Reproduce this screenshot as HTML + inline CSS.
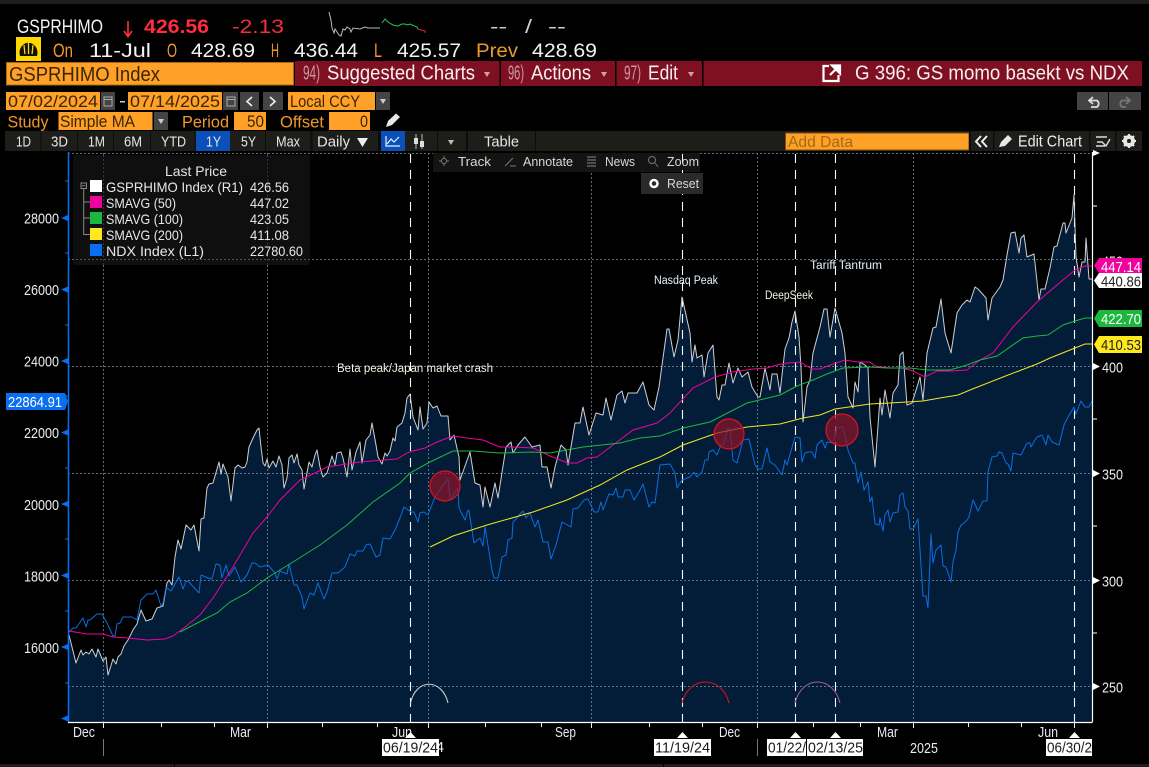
<!DOCTYPE html>
<html><head><meta charset="utf-8"><title>GSPRHIMO Index</title>
<style>
html,body{margin:0;padding:0;background:#000;width:1149px;height:767px;overflow:hidden}
svg{display:block;font-family:"Liberation Sans",sans-serif}
</style></head><body>
<svg width="1149" height="767" viewBox="0 0 1149 767" xmlns="http://www.w3.org/2000/svg">
<rect width="1149" height="767" fill="#000"/>
<rect width="1149" height="4" fill="#1e1e1e"/>
<rect y="764" width="1149" height="3" fill="#1e1e1e"/>
<rect x="174" y="764" width="1" height="3" fill="#000"/><rect x="663" y="764" width="1" height="3" fill="#000"/>

<!-- quote row -->
<g font-size="19">
<text x="17" y="33" textLength="86" lengthAdjust="spacingAndGlyphs" fill="#f2f2f2">GSPRHIMO</text>
<path d="M128 21V36M124 31L128 36.5L132 31" stroke="#ff3040" stroke-width="1.6" fill="none"/>
<text x="144" y="33" textLength="65" lengthAdjust="spacingAndGlyphs" fill="#ff2d3e" font-weight="bold">426.56</text>
<text x="232" y="33" textLength="52" lengthAdjust="spacingAndGlyphs" fill="#f2303c">-2.13</text>
<text x="490" y="33" textLength="17" lengthAdjust="spacingAndGlyphs" fill="#ccc">--</text>
<text x="525" y="33" textLength="7" lengthAdjust="spacingAndGlyphs" fill="#ccc">/</text>
<text x="548" y="33" textLength="18" lengthAdjust="spacingAndGlyphs" fill="#ccc">--</text>
</g>
<polyline fill="none" stroke="#bbb" stroke-width="1" points="329,12 331,20 332,28 334,33 335,29 337,32 339,35 341,36 343,29 345,30 347,27 350,29 351,32 353,28 360,29 365,27 368,28 373,28 380,28"/>
<polyline fill="none" stroke="#22c55a" stroke-width="1" points="382,23 385,19 388,22 393,25 398,26 402,24 405,24 407,25 410,24 417,27 418,29"/>
<polyline fill="none" stroke="#f0203a" stroke-width="1" points="418,29 425,31 425,33"/>

<!-- gauge -->
<rect x="16" y="37" width="25" height="24" fill="#ffd800"/>
<path d="M20 56A9 10 0 1 1 37 56Z" fill="#111"/>
<path d="M28.500 42V55M24 45L25 55M33 45L32 55" stroke="#ffd800" stroke-width="1.300"/>
<rect x="20" y="54" width="17" height="2" fill="#111"/>

<g font-size="19">
<text x="53" y="57" textLength="20" lengthAdjust="spacingAndGlyphs" fill="#f0982a">On</text>
<text x="89" y="57" textLength="62" lengthAdjust="spacingAndGlyphs" fill="#f2f2f2">11-Jul</text>
<text x="167" y="57" textLength="10" lengthAdjust="spacingAndGlyphs" fill="#f0982a">O</text>
<text x="191" y="57" textLength="64" lengthAdjust="spacingAndGlyphs" fill="#f2f2f2">428.69</text>
<text x="271" y="57" textLength="8" lengthAdjust="spacingAndGlyphs" fill="#f0982a">H</text>
<text x="294" y="57" textLength="64" lengthAdjust="spacingAndGlyphs" fill="#f2f2f2">436.44</text>
<text x="374" y="57" textLength="8" lengthAdjust="spacingAndGlyphs" fill="#f0982a">L</text>
<text x="397" y="57" textLength="64" lengthAdjust="spacingAndGlyphs" fill="#f2f2f2">425.57</text>
<text x="476" y="57" textLength="42" lengthAdjust="spacingAndGlyphs" fill="#f0982a">Prev</text>
<text x="532" y="57" textLength="65" lengthAdjust="spacingAndGlyphs" fill="#f2f2f2">428.69</text>
</g>

<!-- command row -->
<rect x="295" y="61" width="847" height="25" fill="#7f1022"/>
<rect x="499.500" y="61" width="1.500" height="25" fill="#000"/>
<rect x="615" y="61" width="1.500" height="25" fill="#000"/>
<rect x="702" y="61" width="1.500" height="25" fill="#000"/>
<rect x="6.500" y="62.500" width="287" height="22.500" fill="#ffa126" stroke="#a86a18"/>
<text x="9" y="81" font-size="20" textLength="151" lengthAdjust="spacingAndGlyphs" fill="#3a2508">GSPRHIMO Index</text>
<g font-size="20">
<text x="303" y="79.500" textLength="17" lengthAdjust="spacingAndGlyphs" fill="#c89aa2">94)</text>
<text x="327" y="79.500" textLength="148" lengthAdjust="spacingAndGlyphs" fill="#f6f0f0">Suggested Charts</text>
<text x="508" y="79.500" textLength="16" lengthAdjust="spacingAndGlyphs" fill="#c89aa2">96)</text>
<text x="531" y="79.500" textLength="60" lengthAdjust="spacingAndGlyphs" fill="#f6f0f0">Actions</text>
<text x="624" y="79.500" textLength="17" lengthAdjust="spacingAndGlyphs" fill="#c89aa2">97)</text>
<text x="648" y="79.500" textLength="30" lengthAdjust="spacingAndGlyphs" fill="#f6f0f0">Edit</text>
<text x="855" y="79.500" textLength="274" lengthAdjust="spacingAndGlyphs" fill="#f6f0f0">G 396: GS momo basekt vs NDX</text>
</g>
<path d="M484 72h6l-3 5zM601 72h6l-3 5zM688 72h6l-3 5z" fill="#c9a6ac"/>
<path d="M829 66H823.500V81H838.500V75" fill="none" stroke="#fff" stroke-width="2.200"/>
<path d="M830 75L838 67M832 65.500H840V73.500Z" stroke="#fff" stroke-width="2.200" fill="#fff"/>

<!-- date row -->
<g font-size="17" fill="#3a2508">
<rect x="6" y="92" width="94" height="18" fill="#ffa126"/>
<text x="8" y="107" textLength="90" lengthAdjust="spacingAndGlyphs">07/02/2024</text>
<rect x="128" y="92" width="94" height="18" fill="#ffa126"/>
<text x="130" y="107" textLength="90" lengthAdjust="spacingAndGlyphs">07/14/2025</text>
<rect x="288" y="92" width="87" height="18" fill="#ffa126"/>
<text x="290" y="107" textLength="70" lengthAdjust="spacingAndGlyphs">Local CCY</text>
</g>
<rect x="120" y="101" width="5" height="1.500" fill="#ccc"/>
<g fill="#444">
<rect x="101" y="92" width="14" height="18"/><rect x="223" y="92" width="15" height="18"/>
<rect x="240" y="92" width="19" height="18"/><rect x="263" y="92" width="20" height="18"/>
<rect x="376" y="92" width="14" height="18"/><rect x="154" y="112" width="14" height="18"/>
<rect x="1077" y="92" width="31" height="18"/><rect x="1109" y="92" width="32" height="18"/>
</g>
<path d="M104 97h8v9h-8zM104 99.500h8M227 97h8v9h-8zM227 99.500h8" fill="none" stroke="#aaa"/>
<path d="M252 97L247 101.500L252 106M270 97L275 101.500L270 106" fill="none" stroke="#eee" stroke-width="1.600"/>
<path d="M380 99h6l-3 5zM158 119h6l-3 5z" fill="#ccc"/>
<path d="M1093 97L1089 100.500L1093 104M1090 100.500H1097A4 4 0 0 1 1097 107H1091" fill="none" stroke="#ddd" stroke-width="1.800"/>
<path d="M1126 97L1130 100.500L1126 104M1129 100.500H1122A4 4 0 0 0 1122 107H1126" fill="none" stroke="#777" stroke-width="1.800"/>

<!-- study row -->
<g font-size="17">
<text x="7.500" y="127.500" textLength="41" lengthAdjust="spacingAndGlyphs" fill="#f0982a">Study</text>
<rect x="58.500" y="112" width="94" height="18" fill="#ffa126"/>
<text x="60" y="127" textLength="75" lengthAdjust="spacingAndGlyphs" fill="#3a2508">Simple MA</text>
<text x="182" y="127.500" textLength="47" lengthAdjust="spacingAndGlyphs" fill="#f0982a">Period</text>
<rect x="234" y="112" width="32" height="18" fill="#ffa126"/>
<text x="247" y="127" textLength="17" lengthAdjust="spacingAndGlyphs" fill="#3a2508">50</text>
<text x="280" y="127.500" textLength="44" lengthAdjust="spacingAndGlyphs" fill="#f0982a">Offset</text>
<rect x="329" y="112" width="41" height="18" fill="#ffa126"/>
<text x="360" y="127" textLength="8" lengthAdjust="spacingAndGlyphs" fill="#3a2508">0</text>
</g>
<path d="M386 127L388 121L396 113.500L400 117L392 125Z" fill="#e8e8e8"/>

<!-- range row -->
<rect x="5" y="131" width="1137" height="20" fill="#1d1d19"/>
<g fill="#0c0c0c">
<rect x="40.500" y="131" width="1" height="20"/><rect x="77" y="131" width="1" height="20"/><rect x="113" y="131" width="1" height="20"/><rect x="150" y="131" width="1" height="20"/><rect x="194.500" y="131" width="1" height="20"/><rect x="265" y="131" width="1" height="20"/><rect x="310.500" y="131" width="2" height="20"/><rect x="378" y="131" width="3" height="20"/><rect x="437" y="131" width="1" height="20"/><rect x="466" y="131" width="2" height="20"/><rect x="535" y="131" width="1" height="20"/>
</g>
<rect x="196" y="131" width="34" height="20" fill="#0a50b8"/>
<rect x="381" y="131" width="24" height="20" fill="#0a50b8"/>
<g font-size="15" fill="#e6e6e6">
<text x="16" y="146.500" textLength="15" lengthAdjust="spacingAndGlyphs">1D</text>
<text x="51" y="146.500" textLength="17" lengthAdjust="spacingAndGlyphs">3D</text>
<text x="88" y="146.500" textLength="17" lengthAdjust="spacingAndGlyphs">1M</text>
<text x="124" y="146.500" textLength="18" lengthAdjust="spacingAndGlyphs">6M</text>
<text x="161" y="146.500" textLength="25" lengthAdjust="spacingAndGlyphs">YTD</text>
<text x="206" y="146.500" textLength="15" lengthAdjust="spacingAndGlyphs">1Y</text>
<text x="241" y="146.500" textLength="15" lengthAdjust="spacingAndGlyphs">5Y</text>
<text x="276" y="146.500" textLength="24" lengthAdjust="spacingAndGlyphs">Max</text>
<text x="317" y="146.500" textLength="33" lengthAdjust="spacingAndGlyphs">Daily</text>
<text x="484" y="146.500" textLength="35" lengthAdjust="spacingAndGlyphs">Table</text>
</g>
<path d="M357 138h11l-5.500 9z" fill="#eee"/>
<path d="M386 136V146H400M387 144L391 139L394 142L399 137" fill="none" stroke="#e8f0ff" stroke-width="1.200"/>
<path d="M416 134V149M422 134V149" stroke="#bbb" stroke-width="1"/><rect x="414" y="138" width="4" height="6" fill="#ddd"/><rect x="420" y="141" width="4" height="6" fill="#ddd"/>
<path d="M448 140h6l-3 5z" fill="#bbb"/>
<rect x="785.500" y="133" width="183.500" height="17" fill="#ffa126" stroke="#7a4c10"/>
<text x="788" y="147" font-size="16" textLength="65" lengthAdjust="spacingAndGlyphs" fill="#a36a14">Add Data</text>
<g fill="#0c0c0c"><rect x="969" y="131" width="2" height="20"/><rect x="993" y="131" width="1.500" height="20"/><rect x="1089" y="131" width="1.500" height="20"/><rect x="1115" y="131" width="1.500" height="20"/></g>
<path d="M981 136L976 141.500L981 147M987 136L982 141.500L987 147" fill="none" stroke="#eee" stroke-width="2"/>
<path d="M999 147L1001 142L1008 135L1012 139L1005 146Z" fill="#e8e8e8"/>
<text x="1018" y="146.500" font-size="16" textLength="64" lengthAdjust="spacingAndGlyphs" fill="#eee">Edit Chart</text>
<path d="M1096 137H1107M1096 146H1105M1097 142H1102L1106 146L1110 139" fill="none" stroke="#ddd" stroke-width="1.400"/>
<circle cx="1129" cy="141" r="4.500" fill="none" stroke="#e8e8e8" stroke-width="3"/>
<path d="M1129 134V148M1122 141H1136M1124 136L1134 146M1134 136L1124 146" stroke="#e8e8e8" stroke-width="2"/>
<circle cx="1129" cy="141" r="2" fill="#1d1d19"/>

<!-- chart fill -->
<polygon fill="#031d38" points="69,722 69,635 76,663 81,650 83,655 86,652 89,654 92,649 96,657 98,649 103,661 106,657 108,675 113,659 116,664 118,657 121,654 124,646 128,640 133,630 137,624 141,610 146,621 152,619 157,608 163,606 167,583 169,580 172,585 175,557 178,540 181,549 186,525 191,530 194,525 199,551 201,519 204,518 207,488 209,484 213,483 219,462 221,474 223,464 228,477 231,501 235,468 238,465 242,468 245,467 247,462 249,447 253,438 257,430 259,428 261,447 263,463 265,466 267,459 269,468 273,461 276,467 279,456 282,465 284,488 287,478 289,458 292,455 294,463 297,454 299,465 302,470 304,489 309,462 312,467 315,455 317,450 320,467 323,477 327,473 332,456 335,465 337,453 341,452 343,458 347,477 350,449 352,470 356,452 360,442 362,463 366,440 370,435 372,423 376,445 378,457 382,464 385,453 387,456 390,451 393,438 395,441 397,427 402,423 405,413 407,398 410,394 413,417 418,430 420,407 423,429 427,423 429,402 433,408 437,406 441,416 448,416 450,440 454,435 459,457 460,480 470,452 475,483 480,485 483,507 485,487 490,507 495,483 498,498 506,447 511,442 513,453 518,445 525,437 532,447 540,445 542,467 547,467 551,488 555,467 561,445 566,450 568,465 575,423 580,423 583,407 589,435 596,413 603,415 606,398 611,420 617,395 622,391 625,403 628,393 637,393 643,382 649,405 654,410 659,387 667,329 669,329 674,357 678,340 682,297 690,333 692,362 695,345 697,358 702,355 704,377 708,353 713,345 717,397 719,400 722,385 725,385 729,363 733,383 738,368 742,377 748,372 752,387 758,397 760,397 765,368 770,390 772,374 777,374 780,393 785,349 789,338 792,322 795,311 799,337 801,367 803,422 807,387 810,380 813,353 820,327 824,309 827,309 830,337 835,308 842,333 845,353 848,397 853,408 855,382 858,392 860,362 865,365 868,368 870,417 875,467 880,398 882,415 885,390 890,418 893,393 898,385 900,355 903,352 907,405 912,403 917,387 920,377 923,400 927,353 933,328 936,327 941,299 945,333 951,353 957,313 962,305 967,300 970,302 975,287 978,289 986,298 988,320 992,298 1000,287 1003,280 1007,255 1011,233 1015,232 1019,253 1021,238 1024,235 1027,257 1034,254 1039,300 1041,289 1045,289 1050,268 1054,247 1057,246 1063,223 1065,223 1066,233 1072,218 1074,195 1076,257 1079,277 1082,262 1085,262 1086,238 1089,279 1092,279 1092,722"/>

<!-- grid -->
<g stroke="#8c98a6" stroke-width="1" stroke-dasharray="2 2" opacity=".7" fill="none">
<path d="M68 153.500H1092M68 259.500H1092M68 366.500H1092M68 473.500H1092M68 580.500H1092M68 686.500H1092"/>
<path d="M103.500 153V722M267.500 153V722M428.500 153V722M591.500 153V722M757.500 153V722M913.500 153V722"/>
</g>

<!-- event lines -->
<g stroke="#fff" stroke-width="1.100" stroke-dasharray="9 7" fill="none">
<path d="M410.500 154V722M682.500 154V722M795.500 154V722M835.500 154V722M1074.500 154V722"/>
</g>

<!-- series -->
<polyline fill="none" stroke="#ccd0d4" stroke-width="1" stroke-linejoin="round" points="69,635 76,663 81,650 83,655 86,652 89,654 92,649 96,657 98,649 103,661 106,657 108,675 113,659 116,664 118,657 121,654 124,646 128,640 133,630 137,624 141,610 146,621 152,619 157,608 163,606 167,583 169,580 172,585 175,557 178,540 181,549 186,525 191,530 194,525 199,551 201,519 204,518 207,488 209,484 213,483 219,462 221,474 223,464 228,477 231,501 235,468 238,465 242,468 245,467 247,462 249,447 253,438 257,430 259,428 261,447 263,463 265,466 267,459 269,468 273,461 276,467 279,456 282,465 284,488 287,478 289,458 292,455 294,463 297,454 299,465 302,470 304,489 309,462 312,467 315,455 317,450 320,467 323,477 327,473 332,456 335,465 337,453 341,452 343,458 347,477 350,449 352,470 356,452 360,442 362,463 366,440 370,435 372,423 376,445 378,457 382,464 385,453 387,456 390,451 393,438 395,441 397,427 402,423 405,413 407,398 410,394 413,417 418,430 420,407 423,429 427,423 429,402 433,408 437,406 441,416 448,416 450,440 454,435 459,457 460,480 470,452 475,483 480,485 483,507 485,487 490,507 495,483 498,498 506,447 511,442 513,453 518,445 525,437 532,447 540,445 542,467 547,467 551,488 555,467 561,445 566,450 568,465 575,423 580,423 583,407 589,435 596,413 603,415 606,398 611,420 617,395 622,391 625,403 628,393 637,393 643,382 649,405 654,410 659,387 667,329 669,329 674,357 678,340 682,297 690,333 692,362 695,345 697,358 702,355 704,377 708,353 713,345 717,397 719,400 722,385 725,385 729,363 733,383 738,368 742,377 748,372 752,387 758,397 760,397 765,368 770,390 772,374 777,374 780,393 785,349 789,338 792,322 795,311 799,337 801,367 803,422 807,387 810,380 813,353 820,327 824,309 827,309 830,337 835,308 842,333 845,353 848,397 853,408 855,382 858,392 860,362 865,365 868,368 870,417 875,467 880,398 882,415 885,390 890,418 893,393 898,385 900,355 903,352 907,405 912,403 917,387 920,377 923,400 927,353 933,328 936,327 941,299 945,333 951,353 957,313 962,305 967,300 970,302 975,287 978,289 986,298 988,320 992,298 1000,287 1003,280 1007,255 1011,233 1015,232 1019,253 1021,238 1024,235 1027,257 1034,254 1039,300 1041,289 1045,289 1050,268 1054,247 1057,246 1063,223 1065,223 1066,233 1072,218 1074,195 1076,257 1079,277 1082,262 1085,262 1086,238 1089,279 1092,279"/>
<polyline fill="none" stroke="#0a6ee0" stroke-width="1" stroke-linejoin="round" points="69,632 73,628 76,628 83,618 86,627 88,620 90,620 97,614 102,614 107,623 113,636 115,636 117,624 120,623 123,617 132,617 137,620 141,600 147,594 153,594 156,590 161,606 163,603 166,587 171,591 179,577 183,589 186,581 189,582 199,593 201,575 208,578 212,579 216,564 220,565 222,578 226,565 229,576 235,567 241,582 247,575 252,563 255,563 260,567 268,565 275,573 277,579 280,571 287,574 289,564 294,585 297,585 302,597 304,609 310,593 314,595 318,583 324,599 327,592 332,573 338,573 345,567 350,554 355,556 357,551 363,551 366,545 370,544 376,557 380,555 383,538 390,539 395,530 397,525 400,518 404,507 411,512 414,512 418,522 420,513 424,512 428,515 435,497 443,485 448,479 450,500 458,488 459,508 465,520 468,510 469,511 474,543 480,538 483,546 485,527 492,570 494,578 498,578 500,568 502,557 506,555 508,540 512,538 513,522 517,518 519,515 523,511 526,518 530,513 535,527 538,520 543,542 548,542 551,559 556,545 562,522 571,527 573,509 578,508 584,500 588,499 594,512 598,512 601,502 603,510 609,494 613,495 616,488 618,497 623,497 625,490 630,490 634,500 639,492 643,484 649,507 652,502 655,503 660,465 670,464 675,473 677,488 682,480 690,477 694,472 697,477 702,472 705,460 708,460 709,452 713,450 717,455 721,445 723,445 728,428 730,429 733,460 737,463 743,440 749,439 755,465 758,469 762,469 767,448 770,462 775,465 782,475 785,460 787,465 795,437 800,438 802,462 805,453 808,452 812,452 815,458 817,445 822,440 825,448 827,442 833,443 837,428 843,427 848,450 853,463 855,463 858,483 861,472 864,490 868,482 870,502 872,497 875,524 879,525 880,518 883,531 885,515 888,510 890,522 893,513 898,512 900,495 903,493 905,507 908,511 910,529 913,529 918,519 923,596 926,596 928,608 931,534 933,563 936,550 941,545 943,566 946,567 951,582 953,562 956,550 958,532 961,525 963,524 967,520 969,517 973,500 978,511 983,501 987,501 988,472 992,457 997,456 999,452 1002,453 1006,463 1008,464 1011,471 1013,453 1021,455 1027,443 1030,443 1031,447 1035,440 1037,437 1042,435 1046,445 1048,435 1052,442 1059,445 1064,425 1068,417 1074,407 1076,414 1081,401 1085,407 1089,407 1092,401"/>
<polyline fill="none" stroke="#f0029c" stroke-width="1" points="69,631 87,634 103,634 113,637 128,638 147,640 165,639 173,636 185,627 200,615 213,598 233,567 253,533 267,517 280,500 300,480 317,472 327,467 347,464 360,462 383,460 397,459 407,453 413,451 425,448 437,442 453,436 467,438 483,440 500,447 513,447 533,448 550,456 568,463 577,463 587,458 597,457 613,445 633,430 657,423 670,413 693,388 715,377 733,372 753,369 767,368 777,365 787,363 800,362 812,369 820,369 833,364 845,360 857,362 870,362 875,366 890,368 903,368 913,371 925,377 937,371 950,371 967,370 980,360 993,353 1013,327 1037,302 1057,285 1075,270 1085,266 1092,266"/>
<polyline fill="none" stroke="#1cb83e" stroke-width="1" points="180,632 203,620 217,613 230,602 247,593 267,578 293,562 320,545 347,525 373,502 400,483 410,473 430,462 453,451 473,451 500,453 533,452 550,453 583,447 620,443 640,438 660,436 683,428 710,422 747,403 780,395 797,386 813,380 827,374 843,368 870,367 887,368 910,368 927,370 950,370 967,365 980,360 997,356 1023,338 1037,336 1048,335 1063,325 1075,321 1085,318 1092,318"/>
<polyline fill="none" stroke="#f4e61e" stroke-width="1" points="430,547 453,536 487,525 533,512 567,500 600,485 627,470 660,457 683,445 717,433 747,427 780,424 803,418 820,415 835,409 870,404 890,403 923,401 940,398 958,395 970,390 1003,377 1037,364 1050,358 1070,350 1085,344 1092,344"/>

<!-- circles -->
<g fill="#8c1428" fill-opacity=".72" stroke="#e2101e" stroke-width="1.200">
<circle cx="445" cy="486" r="15"/><circle cx="729" cy="434" r="15"/><circle cx="842" cy="430" r="16"/>
</g>

<!-- arcs -->
<g fill="none" stroke-width="1.100">
<path d="M410.500 703C416 678 442 678 448 703" stroke="#c8ccd0"/>
<path d="M682 703C689 675 722 675 729 703" stroke="#d8101e"/>
<path d="M795 703C802 675 833 675 840 703" stroke="#9a5aa8"/>
</g>

<!-- annotations -->
<g font-size="11.500" fill="#f4f2e4">
<text x="337" y="372" textLength="156" lengthAdjust="spacingAndGlyphs">Beta peak/Japan market crash</text>
<text x="654" y="284" textLength="64" lengthAdjust="spacingAndGlyphs" fill="#e6f0fa">Nasdaq Peak</text>
<text x="765" y="299" textLength="48" lengthAdjust="spacingAndGlyphs">DeepSeek</text>
<text x="810" y="269" textLength="72" lengthAdjust="spacingAndGlyphs" fill="#e6f0fa">Tariff Tantrum</text>
</g>

<!-- chart toolbar -->
<rect x="433" y="153" width="267" height="19" fill="#141414"/>
<rect x="641" y="173" width="62" height="21" fill="#2a2a2a"/>
<path d="M682.500 154V172" stroke="#fff" stroke-width="1" stroke-dasharray="9 7"/>
<g font-size="13" fill="#d8d8d8">
<text x="458" y="166" textLength="33" lengthAdjust="spacingAndGlyphs">Track</text>
<text x="523" y="166" textLength="50" lengthAdjust="spacingAndGlyphs">Annotate</text>
<text x="605" y="166" textLength="30" lengthAdjust="spacingAndGlyphs">News</text>
<text x="667" y="166" textLength="32" lengthAdjust="spacingAndGlyphs">Zoom</text>
<text x="667" y="188" textLength="32" lengthAdjust="spacingAndGlyphs">Reset</text>
</g>
<circle cx="654" cy="183.500" r="3.500" fill="none" stroke="#fff" stroke-width="2.400"/>
<path d="M444 156V166M439 161H449" stroke="#777"/><circle cx="444" cy="161" r="2.500" fill="#141414" stroke="#777"/>
<path d="M505 166L513 158M510 166H516" stroke="#777"/>
<path d="M587 157H596M587 160H596M587 163H596M587 166H596" stroke="#888"/>
<circle cx="652" cy="160" r="3.500" fill="none" stroke="#777"/><path d="M655 163L658 167" stroke="#777"/>

<!-- legend -->
<rect x="73" y="155" width="237" height="110" rx="2" fill="#0f0f0f"/>
<path d="M68 259.500H310" stroke="#8c98a6" stroke-dasharray="2 2" opacity=".5"/>
<path d="M103.500 155V265M267.500 155V265" stroke="#8c98a6" stroke-dasharray="2 2" opacity=".3"/>
<rect x="81" y="183" width="5.500" height="5.500" fill="none" stroke="#888"/>
<path d="M83.700 189V235M84 202H90M84 218H90M84 234.500H90M82 185.700H85.500" stroke="#888" fill="none"/>
<rect x="90" y="180" width="12" height="12" fill="#fff"/>
<rect x="90" y="196" width="12" height="12" fill="#f0029c"/>
<rect x="90" y="212" width="12" height="12" fill="#1cb83e"/>
<rect x="90" y="228" width="12" height="12" fill="#ffe81e"/>
<rect x="90" y="244" width="12" height="12" fill="#0a6ef0"/>
<g font-size="14" fill="#e4e8ec">
<text x="165" y="176" textLength="62" lengthAdjust="spacingAndGlyphs">Last Price</text>
<text x="106" y="192" textLength="137" lengthAdjust="spacingAndGlyphs">GSPRHIMO Index  (R1)</text>
<text x="250" y="192" textLength="39" lengthAdjust="spacingAndGlyphs">426.56</text>
<text x="106" y="208" textLength="70" lengthAdjust="spacingAndGlyphs">SMAVG (50)</text>
<text x="250" y="208" textLength="39" lengthAdjust="spacingAndGlyphs">447.02</text>
<text x="106" y="224" textLength="77" lengthAdjust="spacingAndGlyphs">SMAVG (100)</text>
<text x="250" y="224" textLength="39" lengthAdjust="spacingAndGlyphs">423.05</text>
<text x="106" y="240" textLength="77" lengthAdjust="spacingAndGlyphs">SMAVG (200)</text>
<text x="250" y="240" textLength="39" lengthAdjust="spacingAndGlyphs">411.08</text>
<text x="106" y="256" textLength="98" lengthAdjust="spacingAndGlyphs">NDX Index  (L1)</text>
<text x="250" y="256" textLength="53" lengthAdjust="spacingAndGlyphs">22780.60</text>
</g>

<!-- left axis -->
<path d="M68.500 152V722" stroke="#0a6ef0" stroke-width="1.500"/>
<path d="M65 181H68M65 253H68M65 325H68M65 396H68M65 468H68M65 539H68M65 611H68M65 683H68" stroke="#0a6ef0"/>
<g fill="#0a6ef0">
<path d="M61 218l7-3v6zM61 289.500l7-3v6zM61 361l7-3v6zM61 432.500l7-3v6zM61 504l7-3v6zM61 575.500l7-3v6zM61 647l7-3v6zM61 718.500l7-3v6z"/>
<path d="M6 393H65L68 401.500L65 410H6Z"/>
</g>
<g font-size="15" fill="#e8ecf0">
<text x="24" y="223.500" textLength="35" lengthAdjust="spacingAndGlyphs">28000</text>
<text x="24" y="295" textLength="35" lengthAdjust="spacingAndGlyphs">26000</text>
<text x="24" y="366.500" textLength="35" lengthAdjust="spacingAndGlyphs">24000</text>
<text x="24" y="438" textLength="35" lengthAdjust="spacingAndGlyphs">22000</text>
<text x="24" y="510" textLength="35" lengthAdjust="spacingAndGlyphs">20000</text>
<text x="24" y="581.500" textLength="35" lengthAdjust="spacingAndGlyphs">18000</text>
<text x="24" y="653" textLength="35" lengthAdjust="spacingAndGlyphs">16000</text>
<text x="8" y="407" textLength="54" lengthAdjust="spacingAndGlyphs" fill="#fff">22864.91</text>
</g>

<!-- right axis -->
<path d="M1092.500 152V722" stroke="#fff" stroke-width="1.200"/>
<path d="M1093 206H1097M1093 419H1097M1093 526H1097M1093 633H1097" stroke="#fff"/>
<path d="M1093 150v6l7-3zM1093 363v7l7-3.500zM1093 470v7l7-3.500zM1093 577v7l7-3.500zM1093 683v7l7-3.500z" fill="#fff"/>
<g font-size="15" fill="#e8ecf0">
<text x="1102" y="266.500" textLength="21" lengthAdjust="spacingAndGlyphs">450</text>
<text x="1102" y="372.500" textLength="21" lengthAdjust="spacingAndGlyphs">400</text>
<text x="1102" y="479.500" textLength="21" lengthAdjust="spacingAndGlyphs">350</text>
<text x="1102" y="586.500" textLength="21" lengthAdjust="spacingAndGlyphs">300</text>
<text x="1102" y="692.500" textLength="21" lengthAdjust="spacingAndGlyphs">250</text>
</g>
<path d="M1099 258H1142V273H1099L1094 265.500Z" fill="#f0029c"/>
<g font-size="15">
<text x="1101" y="272" textLength="40" lengthAdjust="spacingAndGlyphs" fill="#fff">447.14</text>
</g>
<path d="M1099 273H1142V288H1099L1094 280.500Z" fill="#fff"/>
<path d="M1099 310H1142V327H1099L1094 318.500Z" fill="#1cb83e"/>
<path d="M1099 336H1142V353H1099L1094 344.500Z" fill="#ffe81e"/>
<g font-size="15">
<text x="1101" y="286.500" textLength="40" lengthAdjust="spacingAndGlyphs" fill="#222">440.86</text>
<text x="1101" y="324" textLength="40" lengthAdjust="spacingAndGlyphs" fill="#fff">422.70</text>
<text x="1101" y="350" textLength="40" lengthAdjust="spacingAndGlyphs" fill="#222">410.53</text>
</g>

<!-- x axis -->
<path d="M68 722.500H1092.500" stroke="#fff" stroke-width="1.200"/>
<path d="M103.500 723v5M161.500 723v4M214.500 723v4M267.500 723v5M322.500 723v4M377.500 723v4M428.500 723v5M485.500 723v4M541.500 723v4M591.500 723v5M649.500 723v4M702.500 723v4M757.500 723v5M813.500 723v4M860.500 723v4M913.500 723v5M968.500 723v4M1021.500 723v4M1074.500 723v5" stroke="#eee"/>
<path d="M103.500 739v17M757.500 739v17" stroke="#777"/>
<g font-size="14.500" fill="#e8ecf0">
<text x="73" y="737" textLength="22" lengthAdjust="spacingAndGlyphs">Dec</text>
<text x="230" y="737" textLength="21" lengthAdjust="spacingAndGlyphs">Mar</text>
<text x="392" y="737" textLength="20" lengthAdjust="spacingAndGlyphs">Jun</text>
<text x="555" y="737" textLength="21" lengthAdjust="spacingAndGlyphs">Sep</text>
<text x="719" y="737" textLength="21" lengthAdjust="spacingAndGlyphs">Dec</text>
<text x="877" y="737" textLength="21" lengthAdjust="spacingAndGlyphs">Mar</text>
<text x="1038" y="737" textLength="20" lengthAdjust="spacingAndGlyphs">Jun</text>
<text x="910" y="753" textLength="28" lengthAdjust="spacingAndGlyphs">2025</text>
<text x="436" y="752" textLength="8" lengthAdjust="spacingAndGlyphs">4</text>
</g>
<path d="M405 738L410.500 732L416 738ZM677 738L682.500 732L688 738ZM790 738L795.500 732L801 738ZM830 738L835.500 732L841 738ZM1069 738L1074.500 732L1080 738Z" fill="#fff"/>
<g fill="#fff">
<rect x="382" y="739" width="57" height="17"/><rect x="654" y="739" width="57" height="17"/>
<rect x="767" y="739" width="39" height="17"/><rect x="807" y="739" width="56" height="17"/><rect x="1046" y="739" width="46" height="17"/>
</g>
<g font-size="15" fill="#1a1a1a">
<text x="383" y="752.500" textLength="55" lengthAdjust="spacingAndGlyphs">06/19/24</text>
<text x="655" y="752.500" textLength="55" lengthAdjust="spacingAndGlyphs">11/19/24</text>
<text x="768" y="752.500" textLength="38" lengthAdjust="spacingAndGlyphs">01/22/</text>
<text x="808" y="752.500" textLength="55" lengthAdjust="spacingAndGlyphs">02/13/25</text>
<text x="1047" y="752.500" textLength="45" lengthAdjust="spacingAndGlyphs">06/30/2</text>
</g>
</svg>
</body></html>
